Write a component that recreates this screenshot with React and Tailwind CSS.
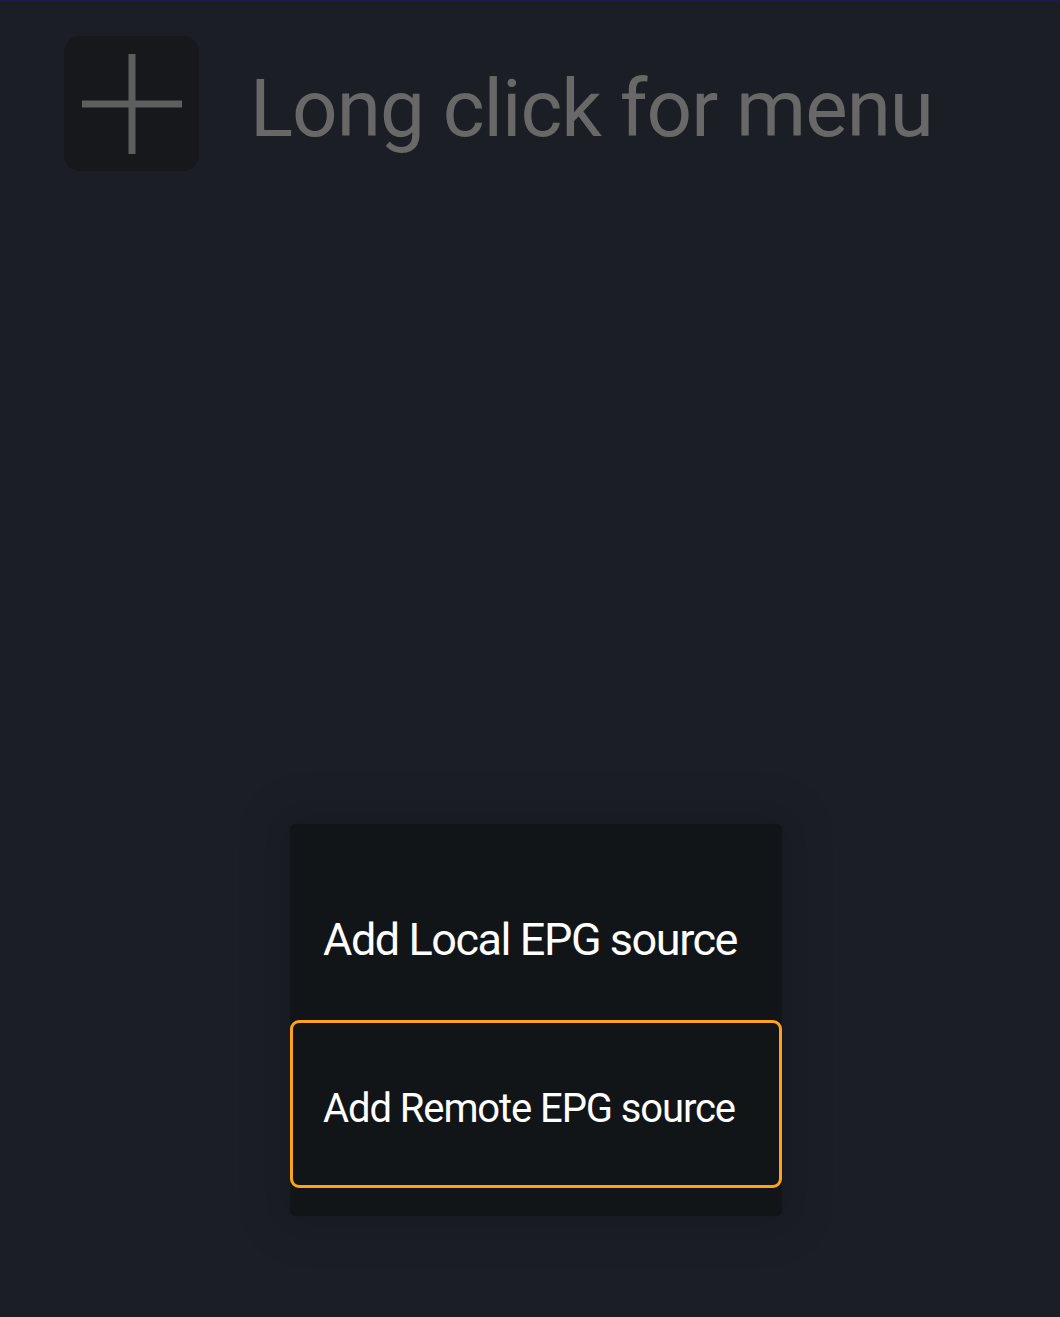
export default function App() {
  return (
    <div
      className="relative min-h-[1317px] w-full overflow-hidden bg-[#1c1e26]"
      style={{ fontFamily: 'Roboto, "Noto Sans", sans-serif' }}
    >
      {/* top accent line */}
      <div className="h-[2px] w-full bg-[#1b1b4d]" />

      {/* header row */}
      <div className="flex items-center gap-[51px] pl-[64px] pt-[34px]">
        <div className="flex h-[135px] w-[135px] items-center justify-center rounded-[16px] bg-[#17181c]">
          <svg width="102" height="102" viewBox="0 0 102 102">
            <path d="M51 1v100M1 51h100" stroke="#5e5e5e" strokeWidth="7" />
          </svg>
        </div>
        <span className="mt-[10px] whitespace-nowrap text-[80px] leading-none tracking-[-1px] text-[#686868]">
          Long click for menu
        </span>
      </div>

      {/* popup menu */}
      <div className="absolute left-[290px] top-[824px] w-[492px] rounded-[6px] bg-[#111518] py-[28px] shadow-[0_0_40px_16px_rgba(0,0,0,0.12)]">
        <div className="flex h-[168px] items-center whitespace-nowrap px-[33px] pt-[8px] text-[45px] tracking-[-1.45px] text-white">
          Add Local EPG source
        </div>
        <div className="flex h-[168px] items-center whitespace-nowrap rounded-[9px] border-[3px] border-[#ffa21a] px-[30px] pt-[10px] text-[40px] tracking-[-1.1px] text-white">
          Add Remote EPG source
        </div>
      </div>
    </div>
  );
}
